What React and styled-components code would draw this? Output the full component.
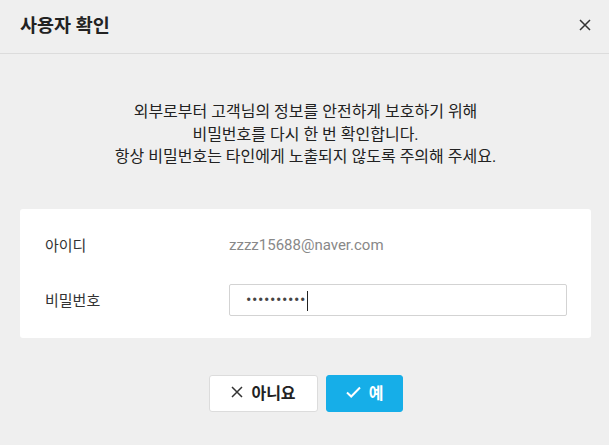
import React from "react";
import styled, { createGlobalStyle } from "styled-components";

const GlobalStyle = createGlobalStyle`
  html, body {
    margin: 0;
    padding: 0;
    background: #efefef;
  }
  body {
    font-family: Roboto, "Noto Sans CJK KR", sans-serif;
    color: #222;
  }
`;

const Dialog = styled.div`
  width: 609px;
  height: 445px;
  background: #efefef;
  display: flex;
  flex-direction: column;
`;

const Header = styled.header`
  height: 54px;
  box-sizing: border-box;
  border-bottom: 1px solid #dcdcdc;
  display: flex;
  align-items: center;
  justify-content: space-between;
  padding: 0 16px 0 20px;
`;

const Title = styled.h1`
  margin: 0 0 6px;
  font-size: 18.5px;
  font-weight: 700;
  color: #222;
`;

const CloseButton = styled.button`
  border: 0;
  background: none;
  padding: 0;
  width: 16px;
  height: 16px;
  display: flex;
  align-items: center;
  justify-content: center;
  margin-bottom: 3px;
`;

const Body = styled.div`
  padding: 47px 18px 0 20px;
  display: flex;
  flex-direction: column;
`;

const Message = styled.p`
  margin: 0 0 40px;
  text-align: center;
  font-size: 16px;
  line-height: 22.5px;
  color: #222;
`;

const Card = styled.div`
  background: #fff;
  border-radius: 3px;
  padding: 16px 24px 18px 25px;
  display: flex;
  flex-direction: column;
  gap: 15px;
`;

const Row = styled.div`
  display: grid;
  grid-template-columns: 184px 1fr;
  align-items: center;
  height: 40px;
`;

const Label = styled.span`
  font-size: 15px;
  color: #333;
`;

const Value = styled.span`
  font-size: 15px;
  color: #888;
`;

const Field = styled.div`
  position: relative;
  display: flex;
`;

const Input = styled.input`
  flex: 1;
  height: 32px;
  box-sizing: border-box;
  border: 1px solid #d3d3d3;
  border-radius: 2px;
  padding: 0 16px;
  font-size: 16px;
  color: #444;
  letter-spacing: 0.6px;
  outline: none;
  font-family: Roboto, sans-serif;
`;

const Caret = styled.span`
  position: absolute;
  left: 78px;
  top: 7px;
  width: 1px;
  height: 20px;
  background: #222;
`;

const Actions = styled.div`
  display: flex;
  justify-content: center;
  gap: 8px;
  margin-top: 37px;
  padding-left: 1px;
`;

const Button = styled.button`
  height: 37px;
  width: ${(p) => p.$w}px;
  box-sizing: border-box;
  border-radius: 3px;
  border: 1px solid ${(p) => (p.$primary ? "#16aee8" : "#dcdcdc")};
  background: ${(p) => (p.$primary ? "#16aee8" : "#fff")};
  color: ${(p) => (p.$primary ? "#fff" : "#222")};
  font-family: Roboto, "Noto Sans CJK KR", sans-serif;
  font-size: 16px;
  font-weight: 700;
  display: flex;
  align-items: center;
  justify-content: center;
  gap: 8px;
  padding: 0 0 2px;
`;

const XIcon = ({ size = 12, color = "#333", width = 1.6 }) => (
  <svg width={size} height={size} viewBox="0 0 12 12">
    <path d="M1 1L11 11M11 1L1 11" stroke={color} strokeWidth={width} />
  </svg>
);

const CheckIcon = () => (
  <svg width="15" height="12" viewBox="0 0 15 12">
    <path d="M1 6.5L5.2 10.5L14 1.5" stroke="#fff" strokeWidth="2" fill="none" />
  </svg>
);

export default function App() {
  return (
    <>
      <GlobalStyle />
      <Dialog>
        <Header>
          <Title>사용자 확인</Title>
          <CloseButton aria-label="닫기">
            <XIcon size={12} color="#333" width={1.5} />
          </CloseButton>
        </Header>
        <Body>
          <Message>
            외부로부터 고객님의 정보를 안전하게 보호하기 위해
            <br />
            비밀번호를 다시 한 번 확인합니다.
            <br />
            항상 비밀번호는 타인에게 노출되지 않도록 주의해 주세요.
          </Message>
          <Card>
            <Row>
              <Label>아이디</Label>
              <Value>zzzz15688@naver.com</Value>
            </Row>
            <Row>
              <Label>비밀번호</Label>
              <Field>
                <Input type="password" defaultValue="1234567890" />
                <Caret />
              </Field>
            </Row>
          </Card>
          <Actions>
            <Button $w={109}>
              <XIcon size={12} color="#333" width={1.5} />
              아니요
            </Button>
            <Button $w={77} $primary>
              <CheckIcon />
              예
            </Button>
          </Actions>
        </Body>
      </Dialog>
    </>
  );
}
